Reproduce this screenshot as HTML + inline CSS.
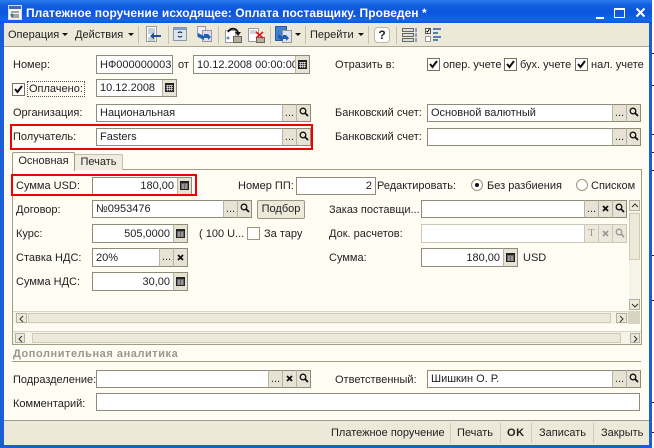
<!DOCTYPE html>
<html><head><meta charset="utf-8"><style>
html,body{margin:0;padding:0;background:#fff}
#w{position:relative;width:654px;height:448px;overflow:hidden;background:#fffcf4;font:11px/14px "Liberation Sans","Noto Sans CJK SC",sans-serif;color:#222}
#w div,#w span.a,#w svg.a{position:absolute;box-sizing:border-box}
.l{white-space:nowrap}
.i{background:#fff;border:1px solid #8f8b78;height:18px;padding:1px 3px;white-space:nowrap;overflow:hidden}
.r{text-align:right}
.b{background:#e6e2d4;border:1px solid #8f8b78;border-left:1px solid #b8b4a4;width:15px;height:18px;text-align:center;font-size:11px;line-height:16px;color:#222}
.c{background:#fff;border:1px solid #77735f;width:13px;height:13px}
svg{display:block}
.sb{background:#f0ede0;border:1px solid #cfcbb8}
.sbn{background:#ece9d8;border:1px solid #b5b19f;font-size:9px;line-height:10px;text-align:center;color:#333}
.red{border:2px solid #f00005}
</style></head><body><div id="w">
<!-- frame -->
<div style="left:0;top:0;width:652px;height:448px;background:#1a5fd8"></div>
<div style="left:0;top:0;width:652px;height:24px;background:linear-gradient(#2a7cf0 0,#1460e0 5px,#0a55dc 12px,#1464ea 20px,#0c55d2 24px)"></div>
<div style="left:652px;top:0;width:2px;height:448px;background:#fff"></div>
<div style="left:652px;top:53px;width:2px;height:1px;background:#222"></div>
<div style="left:652px;top:85px;width:2px;height:1px;background:#222"></div>
<div style="left:652px;top:134px;width:2px;height:1px;background:#222"></div>
<div style="left:652px;top:152px;width:2px;height:1px;background:#222"></div>
<div style="left:652px;top:170px;width:2px;height:1px;background:#222"></div>
<div style="left:652px;top:255px;width:2px;height:1px;background:#222"></div>
<div style="left:652px;top:300px;width:2px;height:1px;background:#222"></div>
<div style="left:652px;top:402px;width:2px;height:1px;background:#222"></div>
<div style="left:652px;top:432px;width:2px;height:1px;background:#222"></div>
<!-- title -->
<svg class="a" style="left:8px;top:5px" width="15" height="15"><rect x=".5" y=".5" width="13" height="14" fill="#f4f4f0" stroke="#dde"/><rect x="1" y="1" width="12" height="3" fill="#3a6bc0"/><path d="M3 7h8M5 10h6M3 12h8" stroke="#555"/><circle cx="4" cy="10" r="1.5" fill="#3a8a50"/></svg>
<div class="l" style="left:26px;top:6px;color:#fff;font:bold 12px/14px 'Liberation Sans',sans-serif;letter-spacing:.04px">Платежное поручение исходящее: Оплата поставщику. Проведен *</div>
<div style="left:596px;top:17px;width:8px;height:2px;background:#fff"></div>
<div style="left:614px;top:8px;width:11px;height:10px;border:1px solid #fff;border-top-width:2px"></div>
<svg class="a" style="left:635px;top:7px" width="12" height="12"><path d="M1.500 1.500L9.500 9.500M9.500 1.500L1.500 9.500" stroke="#fff" stroke-width="2"/></svg>
<!-- toolbar -->
<div style="left:4px;top:23px;width:645px;height:24px;background:#ece9d8;border-bottom:1px solid #a8a594"></div>
<div class="l" style="left:8px;top:28px">Операция</div>
<svg class="a" style="left:62px;top:33px" width="6" height="4"><path d="M0 0h6L3 3z" fill="#111"/></svg>
<div class="l" style="left:75px;top:28px">Действия</div>
<svg class="a" style="left:128px;top:33px" width="6" height="4"><path d="M0 0h6L3 3z" fill="#111"/></svg>
<div style="left:138px;top:26px;width:1px;height:18px;background:#c5c2b0"></div>
<svg class="a" style="left:145px;top:26px" width="18" height="18"><rect x="1.500" y=".5" width="10" height="15" fill="#fff" stroke="#9a9a9a"/><path d="M3 3h7M3 5h7M3 7h7M3 12h7M3 14h7" stroke="#8aa"/><path d="M16 9H9V6.500L5 10l4 3.500V11h7z" fill="#1f4f9c"/></svg>
<div style="left:168px;top:26px;width:1px;height:18px;background:#c5c2b0"></div>
<svg class="a" style="left:173px;top:27px" width="16" height="16"><rect x=".5" y=".5" width="13" height="13" fill="#dfe5ef" stroke="#89a"/><rect x="1" y="1" width="12" height="2" fill="#7f9cc8"/><path d="M5 6a2.500 2.500 0 0 1 4 0M9 9a2.500 2.500 0 0 1-4 0" fill="none" stroke="#234" stroke-width="1.200"/></svg>
<svg class="a" style="left:196px;top:26px" width="18" height="18"><rect x="1.500" y=".5" width="8" height="10" fill="#eef" stroke="#999"/><rect x="6.500" y="4.500" width="9" height="11" fill="#dde" stroke="#999"/><path d="M2 7l6 3V8h4l3 3-3 3v-2H8v2l-6-3z" fill="#1f5fb0"/></svg>
<div style="left:218px;top:26px;width:1px;height:18px;background:#c5c2b0"></div>
<svg class="a" style="left:224px;top:27px" width="18" height="17"><rect x="1.500" y="3.500" width="10" height="12" fill="#fff" stroke="#999"/><path d="M4 5C7 0 13 1 14 6" fill="none" stroke="#111" stroke-width="1.800"/><path d="M11 5h6l-3 4z" fill="#111"/><rect x="9.500" y="9.500" width="8" height="6" fill="#b6b09a" stroke="#666"/><circle cx="4" cy="11" r="1.500" fill="#5a8ad0"/></svg>
<svg class="a" style="left:247px;top:27px" width="18" height="17"><rect x="1.500" y="1.500" width="10" height="13" fill="#fff" stroke="#999"/><path d="M3 4h7M3 6h7" stroke="#9ab"/><rect x="9.500" y="10.500" width="8" height="5" fill="#b6b09a" stroke="#666"/><path d="M9 5l7 6M16 5l-7 6" stroke="#e01010" stroke-width="1.500"/></svg>
<div style="left:270px;top:26px;width:1px;height:18px;background:#c5c2b0"></div>
<svg class="a" style="left:275px;top:26px" width="18" height="18"><rect x=".5" y=".5" width="11" height="14" fill="#3f7fd8" stroke="#2a5aa0"/><rect x="7.500" y="4.500" width="9" height="12" fill="#dfe5ef" stroke="#999"/><path d="M3 8l5 3V9h3l3 3-3 3v-2H8v2l-5-3z" fill="#1f5fb0"/></svg>
<svg class="a" style="left:295px;top:33px" width="6" height="4"><path d="M0 0h6L3 3z" fill="#111"/></svg>
<div style="left:305px;top:26px;width:1px;height:18px;background:#c5c2b0"></div>
<div class="l" style="left:310px;top:28px">Перейти</div>
<svg class="a" style="left:358px;top:33px" width="6" height="4"><path d="M0 0h6L3 3z" fill="#111"/></svg>
<div style="left:368px;top:26px;width:1px;height:18px;background:#c5c2b0"></div>
<div style="left:374px;top:27px;width:16px;height:16px;background:#fff;border:1px solid #bbb7a6;border-radius:4px;text-align:center;font:bold 12px/14px 'Liberation Sans',sans-serif">?</div>
<div style="left:396px;top:26px;width:1px;height:18px;background:#c5c2b0"></div>
<svg class="a" style="left:402px;top:27px" width="16" height="16"><path d="M.5 1.500h11v3H.5zM.5 6.500h11v3H.5zM.5 11.500h11v3H.5z" fill="#ddd" stroke="#666"/><path d="M13 2h2M13 4h2M13 7h2M13 9h2M13 12h2M13 14h2" stroke="#25a"/></svg>
<svg class="a" style="left:425px;top:27px" width="16" height="16"><rect x=".5" y="1.500" width="5" height="5" fill="#fff" stroke="#555"/><path d="M1.500 4l1 1 2-3" fill="none" stroke="#000"/><rect x=".5" y="9.500" width="5" height="5" fill="#fff" stroke="#999"/><path d="M8 2h8M8 6h5M8 10h8M8 13h5" stroke="#2c5cb0" stroke-width="1.500"/></svg>
<!-- body -->
<div style="left:4px;top:47px;width:645px;height:374px;background:#fffcf4"></div>
<div class="l" style="left:13px;top:58px">Номер:</div>
<div class="i" style="left:96px;top:55px;width:77px;height:19px;padding-top:2px">НФ000000003</div>
<div class="l" style="left:178px;top:58px">от</div>
<div class="i" style="left:193px;top:55px;width:103px;height:19px;padding-top:2px">10.12.2008 00:00:00</div>
<div class="b" style="left:295px;top:55px;height:19px"><svg style="margin:4px 0 0 2px" width="9" height="9"><path d="M0 0h9v9H0z" fill="#222"/><path d="M1 2.500h7M1 4.500h7M1 6.500h7M2.500 2v6M4.500 2v6M6.500 2v6" stroke="#ddd" stroke-width=".7"/></svg></div>
<div class="c" style="left:12px;top:83px"><svg width="11" height="11"><path d="M2 5l2.500 3L9 2" fill="none" stroke="#111" stroke-width="2"/></svg></div>
<div class="l" style="left:27px;top:81px;border:1px dotted #555;padding:0 1px;height:16px;line-height:14px">Оплачено:</div>
<div class="i" style="left:96px;top:79px;width:67px">10.12.2008</div>
<div class="b" style="left:162px;top:79px"><svg style="margin:3px 0 0 2px" width="9" height="9"><path d="M0 0h9v9H0z" fill="#222"/><path d="M1 2.500h7M1 4.500h7M1 6.500h7M2.500 2v6M4.500 2v6M6.500 2v6" stroke="#ddd" stroke-width=".7"/></svg></div>
<div class="l" style="left:335px;top:58px">Отразить в:</div>
<div class="c" style="left:427px;top:58px"><svg width="11" height="11"><path d="M2 5l2.500 3L9 2" fill="none" stroke="#111" stroke-width="2"/></svg></div>
<div class="l" style="left:443px;top:58px">опер. учете</div>
<div class="c" style="left:504px;top:58px"><svg width="11" height="11"><path d="M2 5l2.500 3L9 2" fill="none" stroke="#111" stroke-width="2"/></svg></div>
<div class="l" style="left:520px;top:58px">бух. учете</div>
<div class="c" style="left:575px;top:58px"><svg width="11" height="11"><path d="M2 5l2.500 3L9 2" fill="none" stroke="#111" stroke-width="2"/></svg></div>
<div class="l" style="left:591px;top:58px">нал. учете</div>
<!-- org -->
<div class="l" style="left:13px;top:106px">Организация:</div>
<div class="i" style="left:96px;top:104px;width:187px">Национальная</div>
<div class="b" style="left:282px;top:104px">...</div>
<div class="b" style="left:296px;top:104px"><svg style="margin:2px 0 0 2px" width="10" height="10"><circle cx="4" cy="4" r="2.800" fill="none" stroke="#111" stroke-width="1.300"/><path d="M6 6l3 3" stroke="#111" stroke-width="1.800"/></svg></div>
<div class="l" style="left:335px;top:106px">Банковский счет:</div>
<div class="i" style="left:427px;top:104px;width:186px">Основной валютный</div>
<div class="b" style="left:612px;top:104px">...</div>
<div class="b" style="left:626px;top:104px"><svg style="margin:2px 0 0 2px" width="10" height="10"><circle cx="4" cy="4" r="2.800" fill="none" stroke="#111" stroke-width="1.300"/><path d="M6 6l3 3" stroke="#111" stroke-width="1.800"/></svg></div>
<!-- recipient -->
<div class="l" style="left:13px;top:130px">Получатель:</div>
<div class="i" style="left:96px;top:128px;width:187px">Fasters</div>
<div class="b" style="left:282px;top:128px">...</div>
<div class="b" style="left:296px;top:128px"><svg style="margin:2px 0 0 2px" width="10" height="10"><circle cx="4" cy="4" r="2.800" fill="none" stroke="#111" stroke-width="1.300"/><path d="M6 6l3 3" stroke="#111" stroke-width="1.800"/></svg></div>
<div class="red" style="left:10px;top:124px;width:303px;height:26px"></div>
<div class="l" style="left:335px;top:130px">Банковский счет:</div>
<div class="i" style="left:427px;top:128px;width:186px"></div>
<div class="b" style="left:612px;top:128px">...</div>
<div class="b" style="left:626px;top:128px"><svg style="margin:2px 0 0 2px" width="10" height="10"><circle cx="4" cy="4" r="2.800" fill="none" stroke="#111" stroke-width="1.300"/><path d="M6 6l3 3" stroke="#111" stroke-width="1.800"/></svg></div>
<!-- tab panel -->
<div style="left:12px;top:169px;width:630px;height:176px;border:1px solid #a09c88"></div>
<div style="left:74px;top:154px;width:49px;height:16px;background:#f0ede0;border:1px solid #c2bead;border-bottom:0;border-radius:2px 2px 0 0;text-align:center;line-height:15px">Печать</div>
<div style="left:12px;top:152px;width:63px;height:19px;background:#fffcf4;border:1px solid #a09c88;border-bottom:0;border-radius:2px 2px 0 0;text-align:center;line-height:17px">Основная</div>
<div class="l" style="left:16px;top:179px">Сумма USD:</div>
<div class="i r" style="left:92px;top:177px;width:86px">180,00</div>
<div class="b" style="left:177px;top:177px"><svg style="margin:3px 0 0 2px" width="9" height="9"><path d="M0 0h9v9H0z" fill="#222"/><path d="M1 3h7M1 5h7M1 7h7M3 3v5M6 3v5" stroke="#ddd" stroke-width=".8"/></svg></div>
<div class="red" style="left:11px;top:174px;width:186px;height:22px"></div>
<div class="l" style="left:238px;top:179px">Номер ПП:</div>
<div class="i r" style="left:296px;top:177px;width:80px">2</div>
<div class="l" style="left:377px;top:179px">Редактировать:</div>
<div style="left:471px;top:179px;width:12px;height:12px;background:#fff;border:1px solid #9a9680;border-radius:50%"><div style="left:3px;top:3px;width:4px;height:4px;background:#111;border-radius:50%"></div></div>
<div class="l" style="left:487px;top:179px">Без разбиения</div>
<div style="left:576px;top:179px;width:12px;height:12px;background:#fff;border:1px solid #9a9680;border-radius:50%"></div>
<div class="l" style="left:591px;top:179px">Списком</div>
<!-- left col -->
<div class="l" style="left:16px;top:203px">Договор:</div>
<div class="i" style="left:92px;top:200px;width:132px">№0953476</div>
<div class="b" style="left:223px;top:200px">...</div>
<div class="b" style="left:237px;top:200px"><svg style="margin:2px 0 0 2px" width="10" height="10"><circle cx="4" cy="4" r="2.800" fill="none" stroke="#111" stroke-width="1.300"/><path d="M6 6l3 3" stroke="#111" stroke-width="1.800"/></svg></div>
<div style="left:257px;top:200px;width:48px;height:19px;background:#ece9d8;border:1px solid #9a9680;border-radius:2px;text-align:center;line-height:17px">Подбор</div>
<div class="l" style="left:16px;top:227px">Курс:</div>
<div class="i r" style="left:92px;top:224px;width:82px;height:19px;padding-top:2px">505,0000</div>
<div class="b" style="left:173px;top:224px;height:19px"><svg style="margin:4px 0 0 2px" width="9" height="9"><path d="M0 0h9v9H0z" fill="#222"/><path d="M1 3h7M1 5h7M1 7h7M3 3v5M6 3v5" stroke="#ddd" stroke-width=".8"/></svg></div>
<div class="l" style="left:199px;top:227px">( 100 U...</div>
<div class="c" style="left:247px;top:227px;border-color:#9a9680"></div>
<div class="l" style="left:264px;top:227px">За тару</div>
<div class="l" style="left:16px;top:251px">Ставка НДС:</div>
<div class="i" style="left:92px;top:248px;width:68px;height:19px;padding-top:2px">20%</div>
<div class="b" style="left:159px;top:248px;height:19px;line-height:17px">...</div>
<div class="b" style="left:173px;top:248px;height:19px"><svg style="margin:5px 0 0 3px" width="8" height="8"><path d="M1 1l5 5M6 1L1 6" stroke="#111" stroke-width="1.800"/></svg></div>
<div class="l" style="left:16px;top:275px">Сумма НДС:</div>
<div class="i r" style="left:92px;top:272px;width:82px;height:19px;padding-top:2px">30,00</div>
<div class="b" style="left:173px;top:272px;height:19px"><svg style="margin:4px 0 0 2px" width="9" height="9"><path d="M0 0h9v9H0z" fill="#222"/><path d="M1 3h7M1 5h7M1 7h7M3 3v5M6 3v5" stroke="#ddd" stroke-width=".8"/></svg></div>
<!-- right col -->
<div class="l" style="left:329px;top:203px">Заказ поставщи...</div>
<div class="i" style="left:421px;top:200px;width:164px"></div>
<div class="b" style="left:584px;top:200px">...</div>
<div class="b" style="left:598px;top:200px"><svg style="margin:4px 0 0 3px" width="8" height="8"><path d="M1 1l5 5M6 1L1 6" stroke="#111" stroke-width="1.800"/></svg></div>
<div class="b" style="left:612px;top:200px"><svg style="margin:2px 0 0 2px" width="10" height="10"><circle cx="4" cy="4" r="2.800" fill="none" stroke="#111" stroke-width="1.300"/><path d="M6 6l3 3" stroke="#111" stroke-width="1.800"/></svg></div>
<div class="l" style="left:329px;top:227px">Док. расчетов:</div>
<div class="i" style="left:421px;top:224px;width:164px;height:19px;border-color:#ccc8b8"></div>
<div class="b" style="left:584px;top:224px;height:19px;background:#ece9dc;border-color:#ccc8b8;color:#999;font:11px/16px 'Liberation Serif',serif">T</div>
<div class="b" style="left:598px;top:224px;height:19px;background:#ece9dc;border-color:#ccc8b8"><svg style="margin:5px 0 0 3px" width="8" height="8"><path d="M1 1l5 5M6 1L1 6" stroke="#999" stroke-width="1.800"/></svg></div>
<div class="b" style="left:612px;top:224px;height:19px;background:#ece9dc;border-color:#ccc8b8"><svg style="margin:3px 0 0 2px" width="10" height="10"><circle cx="4" cy="4" r="2.800" fill="none" stroke="#999" stroke-width="1.300"/><path d="M6 6l3 3" stroke="#999" stroke-width="1.800"/></svg></div>
<div class="l" style="left:329px;top:251px">Сумма:</div>
<div class="i r" style="left:421px;top:248px;width:83px;height:19px;padding-top:2px">180,00</div>
<div class="b" style="left:503px;top:248px;height:19px"><svg style="margin:4px 0 0 2px" width="9" height="9"><path d="M0 0h9v9H0z" fill="#222"/><path d="M1 3h7M1 5h7M1 7h7M3 3v5M6 3v5" stroke="#ddd" stroke-width=".8"/></svg></div>
<div class="l" style="left:523px;top:251px">USD</div>
<!-- scrollbars -->
<div style="left:629px;top:200px;width:11px;height:111px;background:#f6f3e8"></div>
<div class="sbn" style="left:629px;top:200px;width:11px;height:11px"><svg style="margin:2px 0 0 1px" width="8" height="5"><path d="M1 4l3-3 3 3" fill="none" stroke="#333"/></svg></div>
<div class="sb" style="left:629px;top:213px;width:11px;height:47px;background:#ece9d8"></div>
<div class="sbn" style="left:629px;top:299px;width:11px;height:11px"><svg style="margin:3px 0 0 1px" width="8" height="5"><path d="M1 1l3 3 3-3" fill="none" stroke="#333"/></svg></div>
<div style="left:13px;top:311px;width:615px;height:13px;background:#f6f3e8;border-top:1px solid #d8d4c4"></div>
<div class="sbn" style="left:16px;top:313px;width:11px;height:10px"><svg style="margin:1px 0 0 2px" width="5" height="8"><path d="M4 1L1 4l3 3" fill="none" stroke="#333"/></svg></div>
<div class="sb" style="left:28px;top:313px;width:583px;height:10px;background:#ece9d8"></div>
<div class="sbn" style="left:616px;top:313px;width:11px;height:10px"><svg style="margin:1px 0 0 2px" width="5" height="8"><path d="M1 1l3 3-3 3" fill="none" stroke="#333"/></svg></div>
<div style="left:628px;top:311px;width:12px;height:13px;background:#d8d4c2"></div>
<div style="left:13px;top:331px;width:628px;height:13px;background:#f6f3e8;border-top:1px solid #d8d4c4"></div>
<div class="sbn" style="left:15px;top:333px;width:10px;height:10px"><svg style="margin:1px 0 0 2px" width="5" height="8"><path d="M4 1L1 4l3 3" fill="none" stroke="#333"/></svg></div>
<div class="sb" style="left:32px;top:333px;width:589px;height:10px;background:#ece9d8"></div>
<div class="sbn" style="left:630px;top:333px;width:10px;height:10px"><svg style="margin:1px 0 0 2px" width="5" height="8"><path d="M1 1l3 3-3 3" fill="none" stroke="#333"/></svg></div>
<!-- analytics -->
<div class="l" style="left:13px;top:347px;color:#9a968a;font-weight:bold;letter-spacing:.55px">Дополнительная аналитика</div>
<div style="left:12px;top:361px;width:629px;height:1px;background:#a09c88"></div>
<div class="l" style="left:13px;top:373px">Подразделение:</div>
<div class="i" style="left:96px;top:370px;width:173px">&nbsp;</div>
<div class="b" style="left:268px;top:370px">...</div>
<div class="b" style="left:282px;top:370px"><svg style="margin:4px 0 0 3px" width="8" height="8"><path d="M1 1l5 5M6 1L1 6" stroke="#111" stroke-width="1.800"/></svg></div>
<div class="b" style="left:296px;top:370px"><svg style="margin:2px 0 0 2px" width="10" height="10"><circle cx="4" cy="4" r="2.800" fill="none" stroke="#111" stroke-width="1.300"/><path d="M6 6l3 3" stroke="#111" stroke-width="1.800"/></svg></div>
<div class="l" style="left:335px;top:373px">Ответственный:</div>
<div class="i" style="left:427px;top:370px;width:186px">Шишкин О. Р.</div>
<div class="b" style="left:612px;top:370px">...</div>
<div class="b" style="left:626px;top:370px"><svg style="margin:2px 0 0 2px" width="10" height="10"><circle cx="4" cy="4" r="2.800" fill="none" stroke="#111" stroke-width="1.300"/><path d="M6 6l3 3" stroke="#111" stroke-width="1.800"/></svg></div>
<div class="l" style="left:13px;top:397px">Комментарий:</div>
<div class="i" style="left:96px;top:393px;width:544px"></div>
<!-- bottom bar -->
<div style="left:4px;top:420px;width:645px;height:25px;background:#ece9d8;border-top:1px solid #a09c88"></div>
<div class="l" style="left:331px;top:426px">Платежное поручение</div>
<div style="left:450px;top:423px;width:1px;height:20px;background:#d0ccbb"></div>
<div class="l" style="left:457px;top:426px">Печать</div>
<div style="left:500px;top:423px;width:1px;height:20px;background:#d0ccbb"></div>
<div class="l" style="left:507px;top:426px;font-weight:bold;letter-spacing:.6px">OK</div>
<div style="left:531px;top:423px;width:1px;height:20px;background:#d0ccbb"></div>
<div class="l" style="left:539px;top:426px">Записать</div>
<div style="left:593px;top:423px;width:1px;height:20px;background:#d0ccbb"></div>
<div class="l" style="left:601px;top:426px">Закрыть</div>
</div></body></html>
